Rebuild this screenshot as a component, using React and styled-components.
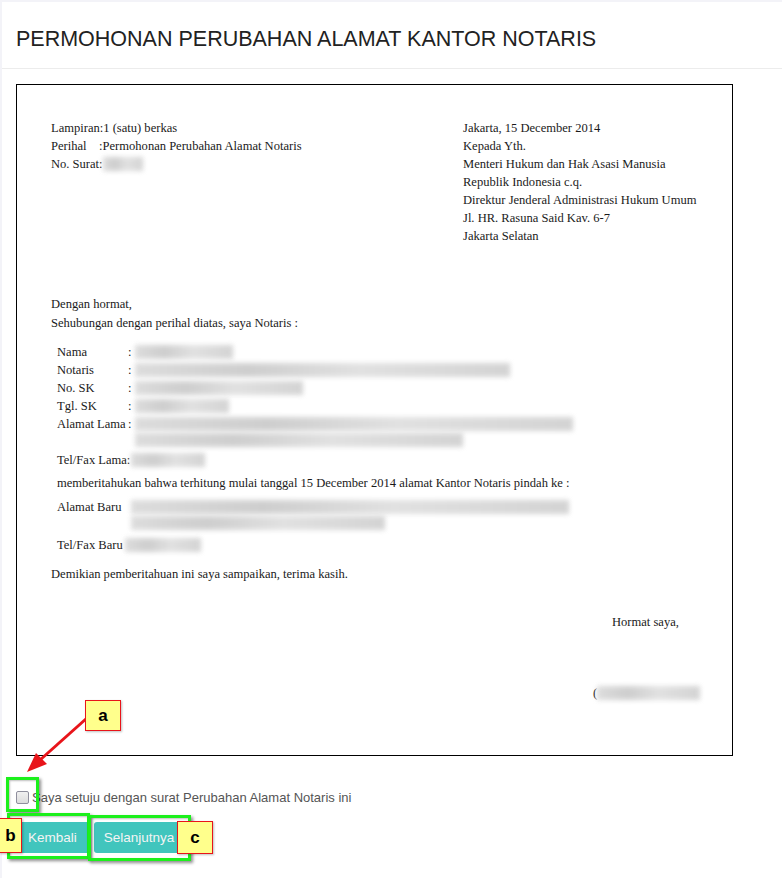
import React from "react";
import styled, { createGlobalStyle } from "styled-components";

const Global = createGlobalStyle`
  html, body { margin: 0; padding: 0; }
  body { background: #f3f3f8; font-family: "Liberation Sans", Arial, sans-serif; }
`;

const Page = styled.div`
  position: relative;
  width: 782px;
  height: 878px;
  overflow: hidden;
`;

const Panel = styled.div`
  margin: 2px 0 0 2px;
  background: #fff;
  height: 876px;
`;

const Header = styled.div`
  height: 66px;
  padding: 0 14px;
  display: flex;
  align-items: center;
  border-bottom: 1px solid #ececec;
`;

const Title = styled.h1`
  margin: 9px 0 0 0;
  font-family: "Liberation Sans", Arial, sans-serif;
  font-weight: normal;
  font-size: 21.5px;
  color: #222;
`;

const Body = styled.div`
  padding: 15px 0 0 14px;
`;

const Letter = styled.div`
  box-sizing: border-box;
  width: 717px;
  height: 672px;
  border: 1px solid #000;
  padding: 34px 34px 0 34px;
  font-family: "Liberation Serif", "Times New Roman", serif;
  font-size: 12.55px;
  line-height: 18px;
  color: #1a1a1a;
`;

const TopRow = styled.div`
  display: flex;
`;

const LeftCol = styled.div`
  width: 412px;
  flex: none;
`;

const RightCol = styled.div`
  flex: none;
`;

const Line = styled.div`
  white-space: nowrap;
  margin-top: ${(p) => p.$mt || 0}px;
`;

const Redact = styled.span`
  display: inline-block;
  vertical-align: top;
  width: ${(p) => p.$w}px;
  height: 14px;
  margin-top: 2px;
  background: linear-gradient(90deg, #d9d9d9, #c9c9c9 30%, #dedede 60%, #cfcfcf);
  filter: blur(2.5px);
  opacity: 0.9;
`;

const Greeting = styled.div`
  margin-top: 50px;
`;

const DataTable = styled.div`
  margin: 11px 0 0 6px;
`;

const DataRow = styled.div`
  display: flex;
  white-space: nowrap;
  margin-top: ${(p) => p.$mt || 0}px;
`;

const Label = styled.span`
  width: ${(p) => (p.$auto ? "auto" : "71px")};
  flex: none;
`;

const Values = styled.div`
  display: flex;
  flex-direction: column;
  padding-left: ${(p) => p.$pl || 3}px;
`;

const Closing = styled.div`
  margin-top: 30px;
  padding-left: 561px;
  white-space: nowrap;
`;

const Signature = styled.div`
  margin-top: 53px;
  padding-left: 542px;
  white-space: nowrap;
`;

const AgreeRow = styled.label`
  display: flex;
  align-items: center;
  margin: 34px 0 0 0;
  font-family: "Liberation Sans", Arial, sans-serif;
  font-size: 13px;
  color: #555;
`;

const Check = styled.span`
  box-sizing: border-box;
  width: 13px;
  height: 13px;
  border: 1px solid #8f8f9d;
  border-radius: 2px;
  background: linear-gradient(#f0f0f0, #dcdcdc);
  margin-right: 3px;
  flex: none;
`;

const Buttons = styled.div`
  display: flex;
  gap: 4px;
  margin: 17px 0 0 -1px;
`;

const Button = styled.button`
  height: 31px;
  padding: 0 ${(p) => p.$px || 12}px;
  border: none;
  border-radius: 3px;
  background: #41c5bd;
  color: #f4f4f4;
  font-family: "Liberation Sans", Arial, sans-serif;
  font-size: 13.5px;
  cursor: pointer;
`;

const Tag = styled.div`
  position: absolute;
  left: ${(p) => p.$x}px;
  top: ${(p) => p.$y}px;
  width: ${(p) => p.$w}px;
  height: ${(p) => p.$h}px;
  box-sizing: border-box;
  background: #ffff8c;
  border: 1px solid #e8141a;
  display: flex;
  align-items: center;
  justify-content: center;
  font-family: "Liberation Sans", Arial, sans-serif;
  font-weight: bold;
  font-size: 17px;
  color: #000;
  box-shadow: 1px 1px 2px rgba(0, 0, 0, 0.25);
`;

const Frame = styled.div`
  position: absolute;
  left: ${(p) => p.$x}px;
  top: ${(p) => p.$y}px;
  width: ${(p) => p.$w}px;
  height: ${(p) => p.$h}px;
  box-sizing: border-box;
  border: 3px solid #1cf01c;
  box-shadow: 2px 2px 3px rgba(0, 0, 0, 0.45), inset 1px 1px 2px rgba(0, 0, 0, 0.25);
  pointer-events: none;
`;

const ArrowSvg = styled.svg`
  position: absolute;
  left: 0;
  top: 0;
  pointer-events: none;
`;

export default function App() {
  return (
    <Page>
      <Global />
      <Panel>
        <Header>
          <Title>PERMOHONAN PERUBAHAN ALAMAT KANTOR NOTARIS</Title>
        </Header>
        <Body>
          <Letter>
            <TopRow>
              <LeftCol>
                <Line>Lampiran:1 (satu) berkas</Line>
                <Line>Perihal&nbsp;&nbsp;&nbsp;&nbsp;:Permohonan Perubahan Alamat Notaris</Line>
                <Line>
                  No. Surat:<Redact $w={40} />
                </Line>
              </LeftCol>
              <RightCol>
                <Line>Jakarta, 15 December 2014</Line>
                <Line>Kepada Yth.</Line>
                <Line>Menteri Hukum dan Hak Asasi Manusia</Line>
                <Line>Republik Indonesia c.q.</Line>
                <Line>Direktur Jenderal Administrasi Hukum Umum</Line>
                <Line>Jl. HR. Rasuna Said Kav. 6-7</Line>
                <Line>Jakarta Selatan</Line>
              </RightCol>
            </TopRow>
            <Greeting>
              <Line>Dengan hormat,</Line>
              <Line $mt={1}>Sehubungan dengan perihal diatas, saya Notaris :</Line>
            </Greeting>
            <DataTable>
              <DataRow>
                <Label>Nama</Label>
                <span>:</span>
                <Values><Redact $w={98} /></Values>
              </DataRow>
              <DataRow>
                <Label>Notaris</Label>
                <span>:</span>
                <Values><Redact $w={375} /></Values>
              </DataRow>
              <DataRow>
                <Label>No. SK</Label>
                <span>:</span>
                <Values><Redact $w={168} /></Values>
              </DataRow>
              <DataRow>
                <Label>Tgl. SK</Label>
                <span>:</span>
                <Values><Redact $w={94} /></Values>
              </DataRow>
              <DataRow>
                <Label>Alamat Lama</Label>
                <span>:</span>
                <Values>
                  <Redact $w={438} />
                  <Redact $w={328} />
                </Values>
              </DataRow>
              <DataRow $mt={4}>
                <Label $auto>Tel/Fax Lama</Label>
                <span>:</span>
                <Values $pl={1}><Redact $w={74} /></Values>
              </DataRow>
              <DataRow $mt={5}>
                memberitahukan bahwa terhitung mulai tanggal 15 December 2014 alamat Kantor Notaris pindah ke :
              </DataRow>
              <DataRow $mt={6}>
                <Label>Alamat Baru</Label>
                <Values>
                  <Redact $w={438} />
                  <Redact $w={254} />
                </Values>
              </DataRow>
              <DataRow $mt={6}>
                <Label $auto>Tel/Fax Baru</Label>
                <Values $pl={2}><Redact $w={76} /></Values>
              </DataRow>
            </DataTable>
            <Line $mt={11}>Demikian pemberitahuan ini saya sampaikan, terima kasih.</Line>
            <Closing>Hormat saya,</Closing>
            <Signature>
              (<Redact $w={103} />
            </Signature>
          </Letter>
          <AgreeRow>
            <Check />
            Saya setuju dengan surat Perubahan Alamat Notaris ini
          </AgreeRow>
          <Buttons>
            <Button $px={13}>Kembali</Button>
            <Button $px={10}>Selanjutnya</Button>
          </Buttons>
        </Body>
      </Panel>

      <ArrowSvg width="782" height="878" viewBox="0 0 782 878">
        <line x1="87" y1="718" x2="40" y2="760" stroke="#e8141a" strokeWidth="3" />
        <polygon points="27,772 36,753 47,764" fill="#e8141a" />
      </ArrowSvg>

      <Frame $x={6} $y={777} $w={33} $h={35} />
      <Frame $x={7} $y={813} $w={83} $h={46} />
      <Frame $x={88} $y={815} $w={103} $h={46} />

      <Tag $x={85} $y={700} $w={36} $h={31}>a</Tag>
      <Tag $x={-1} $y={818} $w={23} $h={35}>b</Tag>
      <Tag $x={177} $y={821} $w={36} $h={33}>c</Tag>
    </Page>
  );
}
